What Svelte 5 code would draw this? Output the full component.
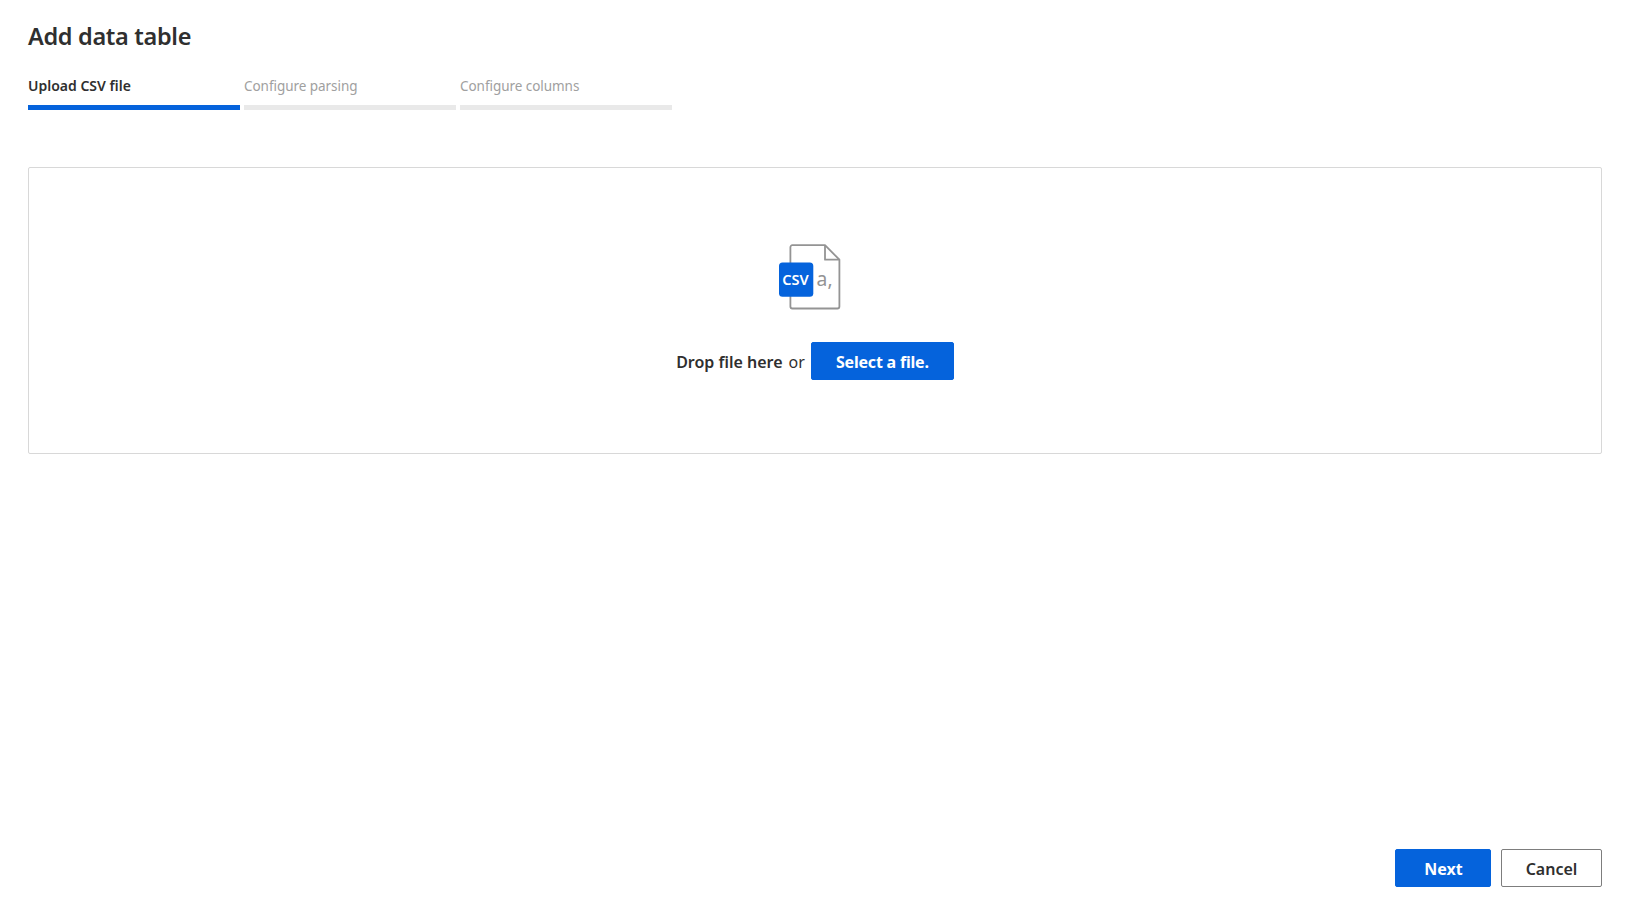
<script lang="ts">
    let steps: string[] = ["Upload CSV file", "Configure parsing", "Configure columns"];
    let current = 0;
    let fileInput: HTMLInputElement;

    function next() {
        current = Math.min(current + 1, steps.length - 1);
    }

    function cancel() {
        current = 0;
    }
</script>

<main class="page">
    <h1>Add data table</h1>

    <ol class="steps">
        {#each steps as step, i}
            <li class="step" class:active={i === current}>{step}</li>
        {/each}
    </ol>

    <section class="dropzone">
        <svg class="file-icon" width="64" height="68" viewBox="0 0 64 68">
            <path
                class="outline"
                d="M13.4 2.2H46L60.4 16.7V63.5A2 2 0 0 1 58.4 65.5H13.4A2 2 0 0 1 11.4 63.5V4.2A2 2 0 0 1 13.4 2.2Z"
            />
            <path class="outline" d="M46 2.2V16.7H60.4" />
            <rect class="badge" x="0" y="19.5" width="34.3" height="34.3" rx="3.5" />
            <text class="badge-text" x="3.3" y="42" textLength="26.5" lengthAdjust="spacingAndGlyphs">CSV</text>
            <text class="letter" x="37.6" y="42.9" textLength="16" lengthAdjust="spacingAndGlyphs">a,</text>
        </svg>
        <div class="prompt">
            <strong>Drop file here</strong>
            <span class="or">or</span>
            <button class="primary select" on:click={() => fileInput.click()}>Select a file.</button>
            <input type="file" accept=".csv" hidden bind:this={fileInput} />
        </div>
    </section>

    <footer>
        <button class="primary next" on:click={next}>Next</button>
        <button class="cancel" on:click={cancel}>Cancel</button>
    </footer>
</main>

<style>
    :global(body) {
        margin: 0;
        background: #fff;
    }
    .page {
        box-sizing: border-box;
        display: flex;
        flex-direction: column;
        height: 100vh;
        padding: 20px 26px 27px 28px;
        color: #2f2f2f;
        font-family: "Noto Sans", "Open Sans", sans-serif;
    }
    h1 {
        margin: 0;
        font-size: 23.5px;
        font-weight: 600;
        letter-spacing: -0.32px;
        line-height: 32px;
    }
    .steps {
        display: flex;
        gap: 4px;
        margin: 24px 0 57px;
        padding: 0;
        list-style: none;
    }
    .step {
        width: 212px;
        height: 29px;
        border-bottom: 5px solid #e9e9e9;
        color: #a0a0a0;
        font-size: 13.5px;
        letter-spacing: -0.05px;
        line-height: 20px;
    }
    .step.active {
        border-color: #0563dc;
        color: #2f2f2f;
        font-size: 14px;
        font-weight: 600;
        letter-spacing: 0;
    }
    .dropzone {
        box-sizing: border-box;
        display: flex;
        flex-direction: column;
        align-items: center;
        height: 287px;
        padding-top: 75px;
        border: 1px solid #d8d8d8;
        border-radius: 2px;
    }
    .file-icon {
        margin-right: 9px;
    }
    .outline {
        fill: none;
        stroke: #949494;
        stroke-width: 1.8;
        stroke-linejoin: round;
    }
    .badge {
        fill: #0563dc;
    }
    .badge-text {
        fill: #fff;
        font-size: 13.5px;
        font-weight: 600;
    }
    .letter {
        fill: #949494;
        font-size: 19px;
    }
    .prompt {
        display: flex;
        align-items: center;
        margin-top: 31px;
        font-size: 16px;
    }
    .prompt strong,
    .or {
        padding-top: 2px;
    }
    .prompt strong {
        font-weight: 600;
    }
    .or {
        margin: 0 6px;
    }
    button {
        box-sizing: border-box;
        height: 38px;
        padding: 2px 0 0;
        border: 1px solid #7d7d7d;
        border-radius: 2px;
        background: #fff;
        color: #2f2f2f;
        font-family: inherit;
        font-size: 16px;
        font-weight: 600;
        cursor: pointer;
    }
    .primary {
        border-color: #0563dc;
        background: #0563dc;
        color: #fff;
        font-weight: 700;
    }
    .select {
        width: 143px;
        letter-spacing: -0.2px;
    }
    .next {
        width: 96px;
        padding-left: 1px;
    }
    .cancel {
        width: 101px;
    }
    footer {
        display: flex;
        justify-content: flex-end;
        gap: 10px;
        margin-top: auto;
    }
</style>
